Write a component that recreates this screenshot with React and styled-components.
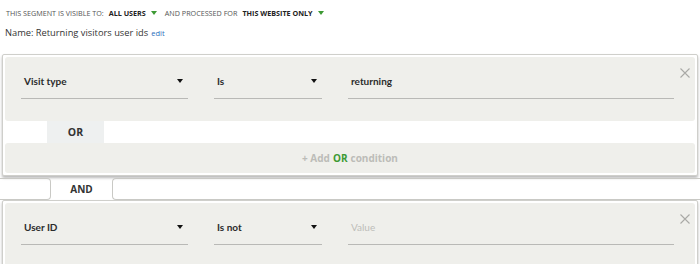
import React from "react";
import styled, { createGlobalStyle } from "styled-components";

const Global = createGlobalStyle`
  html, body { margin: 0; padding: 0; background: #fff; }
  body { font-family: "Open Sans", "Liberation Sans", sans-serif; }
  * { box-sizing: border-box; }
`;

const Page = styled.div`
  width: 700px;
  height: 264px;
  overflow: hidden;
  padding-top: 7px;
`;

const Visibility = styled.div`
  display: flex;
  align-items: center;
  padding-left: 6px;
  height: 11px;
  font-family: "Open Sans", sans-serif;
  font-size: 7.2px;
  color: #555;
  text-transform: uppercase;
  white-space: nowrap;
`;

const Strong = styled.span`
  font-weight: 700;
  color: #222;
  margin-left: 5px;
`;

const Caret = styled.span`
  display: inline-block;
  width: 0;
  height: 0;
  border-left: 3px solid transparent;
  border-right: 3px solid transparent;
  border-top: 4px solid ${(p) => p.$color || "#222"};
  margin: 0 ${(p) => p.$after || 0}px 0 5px;
`;

const NameLine = styled.div`
  display: flex;
  align-items: baseline;
  height: 16px;
  padding-left: 5px;
  margin-top: 7px;
  font-family: "Open Sans", sans-serif;
  font-size: 9.3px;
  line-height: 16px;
  color: #333;
  white-space: nowrap;
`;

const EditLink = styled.a`
  font-size: 7.5px;
  color: #2a6ebb;
  margin-left: 3px;
  text-decoration: none;
`;

const Card = styled.div`
  margin: ${(p) => p.$top}px 2px 0 2px;
  border: 1px solid #cfcfcb;
  border-radius: 2px;
  padding: 2px;
  background: #fff;
  box-shadow: 0 2px 3px rgba(0, 0, 0, 0.28);
`;

const ConditionRow = styled.div`
  position: relative;
  display: flex;
  align-items: flex-start;
  height: 64px;
  padding: 15px 0 0 16px;
  gap: 26px;
  background: #efefeb;
  border-radius: 3px;
`;

const Field = styled.div`
  position: relative;
  width: ${(p) => p.$w}px;
  height: 27px;
  display: flex;
  align-items: flex-start;
  justify-content: space-between;
  padding: 3px 5px 0 3px;
  line-height: 12px;
  border-bottom: 1px solid #b9b9b6;
  font-family: Lato, sans-serif;
  font-size: 10px;
  font-weight: ${(p) => (p.$placeholder ? 400 : 700)};
  color: ${(p) => (p.$placeholder ? "#bdbdb9" : "#2b2b2b")};
`;

const Arrow = styled.span`
  width: 0;
  height: 0;
  margin-top: 4px;
  border-left: 3.5px solid transparent;
  border-right: 3.5px solid transparent;
  border-top: 4px solid #111;
`;

const Close = styled.svg`
  position: absolute;
  top: 11px;
  right: 5px;
`;

const OrRow = styled.div`
  display: flex;
  height: 22px;
  padding-left: 42px;
`;

const OrTab = styled.div`
  width: 57px;
  display: flex;
  align-items: center;
  justify-content: center;
  background: #eef0f0;
  font-family: "Open Sans", sans-serif;
  font-weight: 700;
  font-size: 10.5px;
  color: #333;
`;

const AddBar = styled.div`
  height: 30px;
  display: flex;
  align-items: center;
  justify-content: center;
  background: #efefeb;
  border-radius: 3px;
  font-family: "Open Sans", sans-serif;
  font-weight: 700;
  font-size: 10px;
  color: #bcbcb8;
`;

const Green = styled.span`
  color: #3d9a34;
  margin: 0 3px;
`;

const AndRow = styled.div`
  display: flex;
  align-items: stretch;
  height: 22px;
  margin-top: 2px;
`;

const AndSide = styled.div`
  border: 1px solid #c9c9c5;
  ${(p) =>
    p.$left
      ? "width: 51px; border-left: none; border-radius: 0 4px 4px 0;"
      : "flex: 1; border-right: none; border-radius: 4px 0 0 4px;"}
`;

const AndLabel = styled.div`
  width: 61px;
  display: flex;
  align-items: center;
  justify-content: center;
  font-family: "Open Sans", sans-serif;
  font-weight: 700;
  font-size: 10px;
  color: #333;
`;

const CloseIcon = () => (
  <Close width="10" height="10" viewBox="0 0 10 10">
    <path d="M0.5 0.5 L9.5 9.5 M9.5 0.5 L0.5 9.5" stroke="#a9a9a6" strokeWidth="1.1" fill="none" />
  </Close>
);

function Condition({ field, op, value, placeholder }) {
  return (
    <ConditionRow>
      <Field $w={167}>
        <span>{field}</span>
        <Arrow />
      </Field>
      <Field $w={108}>
        <span>{op}</span>
        <Arrow />
      </Field>
      <Field $w={326} $placeholder={placeholder}>
        <span>{value}</span>
      </Field>
      <CloseIcon />
    </ConditionRow>
  );
}

export default function App() {
  return (
    <Page>
      <Global />
      <Visibility>
        This segment is visible to:
        <Strong>All users</Strong>
        <Caret $color="#3d9a34" $after={8} />
        And processed for
        <Strong>This website only</Strong>
        <Caret $color="#3d9a34" />
      </Visibility>
      <NameLine>
        Name: Returning visitors user ids
        <EditLink href="#">edit</EditLink>
      </NameLine>
      <Card $top={13}>
        <Condition field="Visit type" op="Is" value="returning" />
        <OrRow>
          <OrTab>OR</OrTab>
        </OrRow>
        <AddBar>
          + Add<Green>OR</Green>condition
        </AddBar>
      </Card>
      <AndRow>
        <AndSide $left />
        <AndLabel>AND</AndLabel>
        <AndSide />
      </AndRow>
      <Card $top={0}>
        <Condition field="User ID" op="Is not" value="Value" placeholder />
      </Card>
    </Page>
  );
}
